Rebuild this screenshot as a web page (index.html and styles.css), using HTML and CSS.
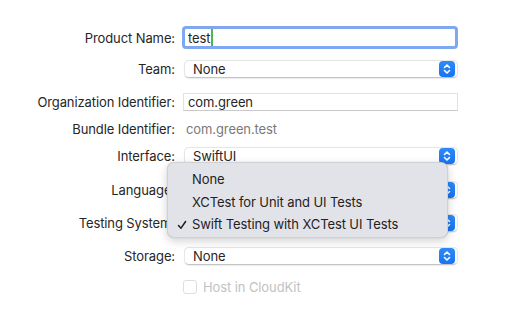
FILE: index.html
```html
<!DOCTYPE html>
<html>
<head>
<meta charset="utf-8">
<link rel="stylesheet" href="styles.css">
</head>
<body>
<div class="sheet">
  <div class="form">
    <div class="row r-product">
      <div class="label">Product Name:</div>
      <div class="control"><div class="field focused"><span>test</span><span class="caret"></span></div></div>
    </div>
    <div class="row r-team">
      <div class="label">Team:</div>
      <div class="control"><div class="popup"><span>None</span><span class="stepper"><svg viewBox="0 0 16 16" width="16" height="16"><path d="M5.5 6.5 L8 4 L10.5 6.5 M5.5 9.5 L8 12 L10.5 9.5" fill="none" stroke="#fff" stroke-width="1.6" stroke-linecap="round" stroke-linejoin="round"/></svg></span></div></div>
    </div>
    <div class="row r-org">
      <div class="label">Organization Identifier:</div>
      <div class="control"><div class="field plain">com.green</div></div>
    </div>
    <div class="row r-bundle">
      <div class="label">Bundle Identifier:</div>
      <div class="control"><div class="static">com.green.test</div></div>
    </div>
    <div class="row r-interface">
      <div class="label">Interface:</div>
      <div class="control"><div class="popup"><span>SwiftUI</span><span class="stepper"><svg viewBox="0 0 16 16" width="16" height="16"><path d="M5.5 6.5 L8 4 L10.5 6.5 M5.5 9.5 L8 12 L10.5 9.5" fill="none" stroke="#fff" stroke-width="1.6" stroke-linecap="round" stroke-linejoin="round"/></svg></span></div></div>
    </div>
    <div class="row r-language">
      <div class="label">Language:</div>
      <div class="control"><div class="popup"><span>Swift</span><span class="stepper"><svg viewBox="0 0 16 16" width="16" height="16"><path d="M5.5 6.5 L8 4 L10.5 6.5 M5.5 9.5 L8 12 L10.5 9.5" fill="none" stroke="#fff" stroke-width="1.6" stroke-linecap="round" stroke-linejoin="round"/></svg></span></div></div>
    </div>
    <div class="row r-testing">
      <div class="label">Testing System:</div>
      <div class="control"><div class="popup"><span>Swift Testing with XCTest UI Tests</span><span class="stepper"><svg viewBox="0 0 16 16" width="16" height="16"><path d="M5.5 6.5 L8 4 L10.5 6.5 M5.5 9.5 L8 12 L10.5 9.5" fill="none" stroke="#fff" stroke-width="1.6" stroke-linecap="round" stroke-linejoin="round"/></svg></span></div></div>
    </div>
    <div class="row r-storage">
      <div class="label">Storage:</div>
      <div class="control"><div class="popup"><span>None</span><span class="stepper"><svg viewBox="0 0 16 16" width="16" height="16"><path d="M5.5 6.5 L8 4 L10.5 6.5 M5.5 9.5 L8 12 L10.5 9.5" fill="none" stroke="#fff" stroke-width="1.6" stroke-linecap="round" stroke-linejoin="round"/></svg></span></div></div>
    </div>
    <div class="row r-check">
      <div class="label"></div>
      <div class="control check"><span class="box"></span><span class="check-text">Host in CloudKit</span></div>
    </div>
  </div>
  <div class="menu">
    <div class="item">None</div>
    <div class="item">XCTest for Unit and UI Tests</div>
    <div class="item selected"><svg class="tick" viewBox="0 0 10 10" width="10" height="10"><path d="M1.5 5.5 L4 8.2 L8.6 1.5" fill="none" stroke="#1e1e1e" stroke-width="1.5" stroke-linecap="round" stroke-linejoin="round"/></svg>Swift Testing with XCTest UI Tests</div>
  </div>
</div>
</body>
</html>
```

FILE: styles.css
```css
html, body {
  margin: 0;
  padding: 0;
  background: #ffffff;
}
body {
  font-family: Inter, "Noto Sans", "Liberation Sans", sans-serif;
  font-size: 13px;
  letter-spacing: -0.1px;
  color: #262626;
  width: 512px;
  height: 314px;
  overflow: hidden;
}
.sheet {
  position: relative;
  width: 512px;
  height: 314px;
}
.form {
  display: flex;
  flex-direction: column;
  padding-top: 25px;
}
.row {
  display: flex;
  align-items: center;
  gap: 8px;
}
.label {
  width: 175px;
  text-align: right;
  white-space: nowrap;
  flex: none;
}
.control {
  width: 275px;
  flex: none;
  display: flex;
  align-items: center;
}
.r-product { height: 25px; }
.r-team { height: 22px; margin-top: 8px; }
.r-org { height: 21px; margin-top: 11px; }
.r-bundle { height: 20px; margin-top: 7px; }
.r-interface { height: 22px; margin-top: 6px; }
.r-language { height: 22px; margin-top: 12px; }
.r-testing { height: 22px; margin-top: 11px; }
.r-storage { height: 22px; margin-top: 11px; }
.r-check { height: 14px; margin-top: 13px; }

.field {
  box-sizing: border-box;
  width: 100%;
  height: 100%;
  background: #fff;
  display: flex;
  align-items: center;
  padding-left: 4px;
}
.field.plain {
  border: 1px solid #e2e2e2;
  border-bottom-color: #c9c9c9;
}
.field.focused {
  width: calc(100% + 3px);
  margin-left: -1px;
  border: 3px solid #80a8f1;
  border-radius: 4px;
  padding-left: 3px;
}
.caret {
  display: inline-block;
  width: 2px;
  height: 17px;
  background: #4cb84c;
  margin-left: 1px;
}
.static {
  color: #7a7a7a;
  padding-left: 3px;
}
.popup {
  box-sizing: border-box;
  width: 100%;
  height: 100%;
  margin-left: 1px;
  background: #fff;
  border: 1px solid #e6e6e6;
  border-bottom-color: #c4c4c4;
  border-radius: 5px;
  box-shadow: 0 0.5px 1px rgba(0, 0, 0, 0.08);
  display: flex;
  align-items: center;
  justify-content: space-between;
  padding-left: 8px;
  padding-right: 2px;
}
.stepper {
  width: 16px;
  height: 16px;
  border-radius: 4px;
  background: linear-gradient(#2d8af8, #1674f3);
  display: flex;
}
.check {
  gap: 6px;
}
.box {
  box-sizing: border-box;
  width: 14px;
  height: 14px;
  border: 1px solid #dedede;
  border-radius: 3px;
  background: #fff;
  flex: none;
}
.check-text {
  color: #c2c2c2;
}
.menu {
  position: absolute;
  left: 167px;
  top: 162px;
  width: 281px;
  height: 76px;
  box-sizing: border-box;
  background: #e2e3e9;
  border: 1px solid rgba(0, 0, 0, 0.08);
  border-radius: 7px;
  box-shadow: 0 3px 10px rgba(0, 0, 0, 0.18), 0 0 1px rgba(0, 0, 0, 0.2);
  padding-top: 5px;
}
.item {
  position: relative;
  height: 22.5px;
  line-height: 22.5px;
  padding-left: 24px;
  color: #222;
  white-space: nowrap;
}
.tick {
  position: absolute;
  left: 9px;
  top: 7px;
}
```
